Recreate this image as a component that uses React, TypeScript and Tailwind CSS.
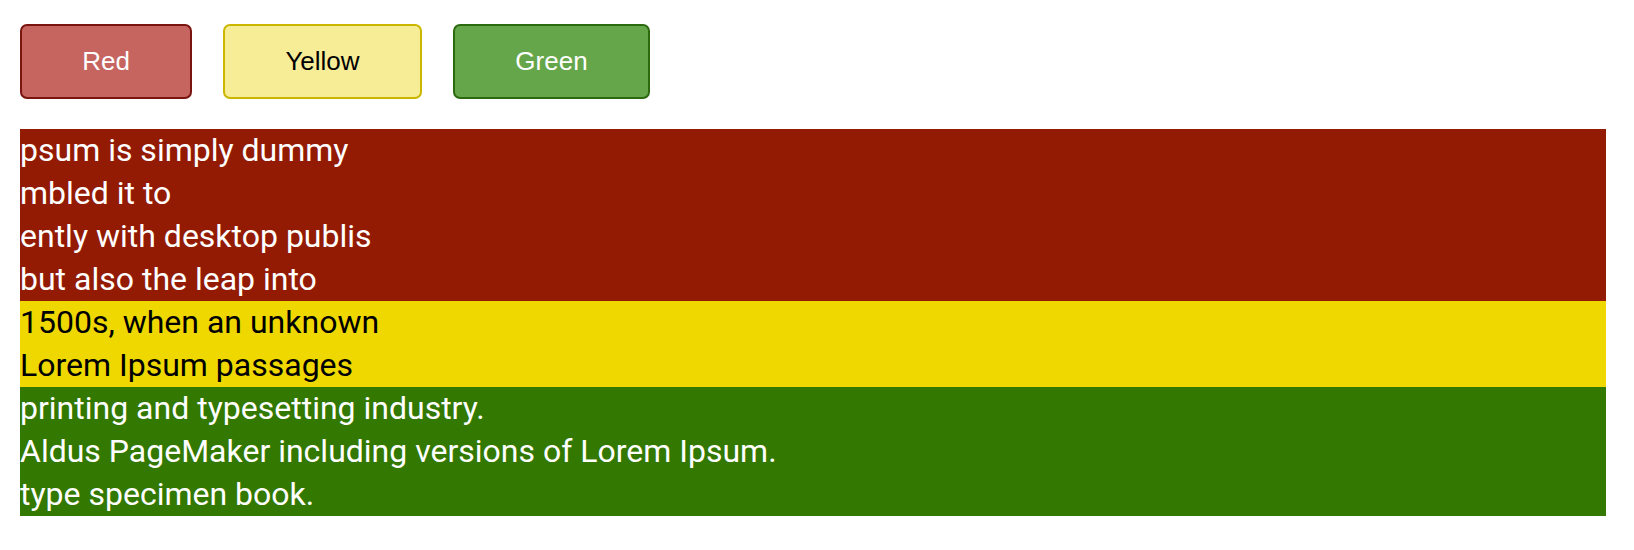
import React from "react";

export default function App() {
  const red = ["psum is simply dummy", "mbled it to", "ently with desktop publis", "but also the leap into"];
  const yellow = ["1500s, when an unknown", "Lorem Ipsum passages"];
  const green = [
    "printing and typesetting industry.",
    "Aldus PageMaker including versions of Lorem Ipsum.",
    "type specimen book.",
  ];
  return (
    <div className="bg-white w-[1634px] h-[550px] pl-[20px] pt-[24px]">
      <div className="flex gap-[31px] font-['Liberation_Sans',Arial,sans-serif] text-[26px]">
        <button className="w-[172px] h-[75px] rounded-[7px] border-2 border-[#7a140f] bg-[#c6645f] text-white">
          Red
        </button>
        <button className="w-[199px] h-[75px] rounded-[7px] border-2 border-[#cbb700] bg-[#f7ed97] text-black">
          Yellow
        </button>
        <button className="w-[197px] h-[75px] rounded-[7px] border-2 border-[#2b6a0e] bg-[#65a64b] text-white">
          Green
        </button>
      </div>
      <div className="mt-[30px] w-[1586px] font-['Roboto',sans-serif] text-[32px] leading-[43px]">
        <div className="bg-[#931b03] text-white">
          {red.map((t) => (
            <div key={t}>{t}</div>
          ))}
        </div>
        <div className="bg-[#eed800] text-black">
          {yellow.map((t) => (
            <div key={t}>{t}</div>
          ))}
        </div>
        <div className="bg-[#337800] text-white">
          {green.map((t) => (
            <div key={t}>{t}</div>
          ))}
        </div>
      </div>
    </div>
  );
}
